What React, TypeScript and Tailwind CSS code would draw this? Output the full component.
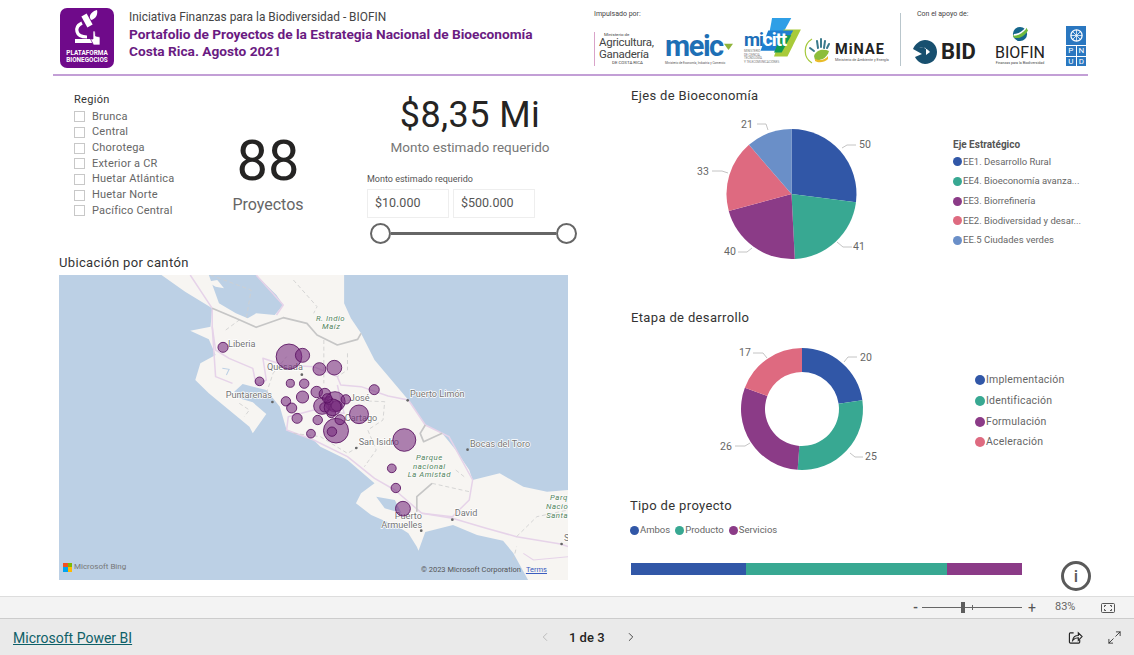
import React from "react";
import { ChevronLeft, ChevronRight, Maximize2 } from "lucide-react";

const BLUE = "#3157a7";
const TEAL = "#38a892";
const PURPLE = "#8b3b87";
const ROSE = "#de6a80";
const SKY = "#6a8fc8";

function polar(cx: number, cy: number, r: number, a: number) {
  return [cx + r * Math.sin(a), cy - r * Math.cos(a)];
}

function Slices({ cx, cy, r, inner = 0, data }: { cx: number; cy: number; r: number; inner?: number; data: [number, string][] }) {
  const total = data.reduce((s, d) => s + d[0], 0);
  let acc = 0;
  return (
    <>
      {data.map(([v, c], i) => {
        const a0 = (acc / total) * Math.PI * 2;
        acc += v;
        const a1 = (acc / total) * Math.PI * 2;
        const large = a1 - a0 > Math.PI ? 1 : 0;
        const [x0, y0] = polar(cx, cy, r, a0);
        const [x1, y1] = polar(cx, cy, r, a1);
        const [x2, y2] = polar(cx, cy, inner, a1);
        const [x3, y3] = polar(cx, cy, inner, a0);
        const d = inner
          ? `M${x0} ${y0}A${r} ${r} 0 ${large} 1 ${x1} ${y1}L${x2} ${y2}A${inner} ${inner} 0 ${large} 0 ${x3} ${y3}Z`
          : `M${cx} ${cy}L${x0} ${y0}A${r} ${r} 0 ${large} 1 ${x1} ${y1}Z`;
        return <path key={i} d={d} fill={c} />;
      })}
    </>
  );
}

function Lead({ pts, tx, ty, label }: { pts: string; tx: number; ty: number; label: string }) {
  return (
    <>
      <polyline points={pts} fill="none" stroke="#c4c4c4" strokeWidth="1" />
      <text x={tx} y={ty} fontSize="10.5" fill="#666" textAnchor="middle" dominantBaseline="middle" fontFamily="Roboto, sans-serif">
        {label}
      </text>
    </>
  );
}

function Dot({ c, size = "w-[9px] h-[9px]" }: { c: string; size?: string }) {
  return <span className={`inline-block shrink-0 rounded-full ${size}`} style={{ backgroundColor: c }} />;
}

function MapView() {
  const circles: [number, number, number][] = [
    [512, 232, 15], [707, 260, 38], [747, 256, 21], [797, 297, 19], [841, 293, 22], [620, 334, 13],
    [711, 340, 12], [752, 341, 14], [959, 359, 15], [747, 381, 18], [698, 394, 14], [715, 414, 15],
    [731, 445, 15], [792, 450, 14], [772, 491, 13], [846, 482, 37], [834, 485, 14], [858, 449, 15],
    [914, 433, 28], [1048, 510, 34], [1011, 595, 13], [1023, 654, 14], [1044, 716, 22],
    [789, 366, 17], [813, 372, 17], [843, 395, 30], [805, 408, 25], [825, 392, 12], [848, 408, 16],
    [812, 412, 14], [832, 430, 13], [875, 388, 14], [836, 412, 25], [820, 385, 14],
  ];
  const labels: [number, number, string][] = [
    [527, 231, "Liberia"], [642, 301, "Quesada"], [520, 384, "Puntarenas"], [1065, 381, "Puerto Limón"],
    [887, 393, "José"], [872, 453, "Cartago"], [913, 525, "San Isidro"], [1242, 530, "Bocas del Toro"],
    [1197, 738, "David"], [1020, 746, "Puerto"], [980, 773, "Armuelles"], [1520, 812, "S"],
  ];
  const green: [number, number, string][] = [
    [830, 153, "R. Indio"], [832, 177, "Maíz"], [1122, 570, "Parque"], [1122, 597, "nacional"],
    [1122, 622, "La Amistad"], [1505, 691, "Parq"], [1500, 718, "Nacio"], [1500, 743, "Santa"],
  ];
  const dots = [[745, 314], [658, 396], [1058, 391], [906, 534], [1235, 539], [1190, 749], [1098, 782], [1513, 822]];
  return (
    <div className="relative w-[509px] h-[305px] bg-[#bcd0e5] overflow-hidden">
      <svg viewBox="27 15 1505 915" preserveAspectRatio="none" className="block w-full h-full">
        <path
          fill="#f7f5f2"
          d="M330 15L400 65L480 115L475 170L415 182L470 208L490 255L445 280L430 330L470 370L530 420L590 470L600 490L640 432L600 397L560 385L545 365L570 342L640 360L680 410L700 480L780 510L800 530L880 570L960 640L920 670L905 700L950 735L1030 770L1060 790L1085 830L1090 842L1110 786L1192 765L1263 795L1340 812L1370 849L1414 930L1532 930L1532 660L1470 665L1400 650L1330 610L1250 630L1240 600L1200 540L1160 490L1110 465L1060 390L1010 330L960 270L920 190L890 145L870 100L870 15Z"
        />
        <path fill="#bcd0e5" d="M470 15L610 15L640 45L670 75L690 105L665 135L610 130L585 145L550 130L500 100Z" />
        <path fill="#f7f5f2" d="M465 35L495 30L515 55L490 50Z" />
        <path fill="#bcd0e5" d="M1225 520L1260 545L1235 570L1215 545ZM965 680L1020 690L1040 730L990 715Z" />
        <path d="M510 295L530 298L522 315" fill="none" stroke="#bcd0e5" strokeWidth="3" />
        <g fill="none" stroke="#e6d3e9" strokeWidth="4.5" strokeLinejoin="round">
          <path d="M415 15L480 115L480 170L490 240L530 265L600 295L610 345L640 330L630 265L690 285L780 290L850 320L860 345L920 350L1000 378L1060 390L1110 465L1180 500L1250 630L1240 690L1190 740L1100 730L1020 660L960 625L880 560L780 510L700 480L705 440L780 420L870 430L850 345" />
          <path d="M480 170L490 320L540 340" />
          <path d="M610 15L650 60L690 105L670 135" />
          <path d="M1100 730L1190 745L1290 775L1380 800L1510 822L1532 830" />
          <path d="M1400 850L1430 870L1532 860" strokeWidth="3" />
        </g>
        <g fill="none" stroke="#cfcfcf" strokeWidth="2.5" strokeDasharray="12 8">
          <path d="M475 15L595 60L580 150" />
          <path d="M720 30L790 110L780 130" />
          <path d="M520 180L560 150M640 370L660 310L700 260" />
          <path d="M810 210L810 340M880 250L880 300L850 320" />
          <path d="M860 390L990 395L985 450L940 480L965 540L930 590" />
          <path d="M720 490L800 500L880 550L930 520" />
          <path d="M560 400L590 420L575 440" />
          <path d="M1130 640L1240 665M1200 600L1225 620" />
          <path d="M1380 800L1440 740L1532 720" />
          <path d="M1370 870L1380 830" />
        </g>
        <g fill="none" stroke="#c6c6c6" strokeWidth="5" strokeLinejoin="round">
          <path d="M480 115L550 145L610 172L690 143L760 160L790 195L850 225L910 208L920 190" />
          <path d="M1110 465L1095 490L1105 515L1160 490" />
          <path d="M1085 725L1085 680L1130 640" />
        </g>
        {dots.map(([x, y], i) => (
          <circle key={i} cx={x} cy={y} r="4" fill="#666" />
        ))}
        <g fontFamily="Roboto, sans-serif" fontSize="27" fill="#757575" stroke="#ffffff" strokeWidth="4" paintOrder="stroke">
          {labels.map(([x, y, t]) => (
            <text key={t} x={x} y={y}>{t}</text>
          ))}
        </g>
        <g fontFamily="Roboto, sans-serif" fontSize="23" fontStyle="italic" fill="#4f8159" stroke="#ffffff" strokeWidth="3" paintOrder="stroke" textAnchor="middle" letterSpacing="1.5">
          {green.map(([x, y, t]) => (
            <text key={t} x={x} y={y}>{t}</text>
          ))}
        </g>
        {circles.map(([x, y, r], i) => (
          <circle key={i} cx={x} cy={y} r={r} fill="#762a7c" fillOpacity="0.58" stroke="#571060" strokeWidth="2.5" />
        ))}
      </svg>
      <div className="absolute left-[4px] bottom-[7px] flex items-center gap-[2px] text-[8px] text-[#777]">
        <span className="grid grid-cols-2 w-[9px] h-[9px]">
          <i className="bg-[#f25022]" />
          <i className="bg-[#7fba00]" />
          <i className="bg-[#00a4ef]" />
          <i className="bg-[#ffb900]" />
        </span>
        Microsoft Bing
      </div>
      <div className="absolute right-[21px] bottom-[5px] flex gap-[5px] text-[7.5px] leading-[10px] text-[#555] whitespace-nowrap">
        <span>© 2023 Microsoft Corporation</span>
        <span className="text-[#3b5dbf] underline">Terms</span>
      </div>
    </div>
  );
}

function LogoBadge() {
  return (
    <div className="w-[54px] h-[60px] rounded-[7px] bg-[#6f0a8a] flex flex-col items-center shrink-0">
      <svg viewBox="0 0 54 42" className="w-[54px] h-[42px] block shrink-0">
        <path d="M24 7L30 18" stroke="#fff" strokeWidth="6" fill="none" />
        <path d="M22 15C14 19 15 29 27 29" stroke="#fff" strokeWidth="3.2" fill="none" />
        <path d="M15 31H32V35H15Z" fill="#fff" />
        <path d="M30 10C29 6 33 3 37 2C38 6 36 11 31 12Z" fill="#fff" />
        <circle cx="27" cy="23" r="2" fill="#6f0a8a" />
        <path d="M33 23L35 23L35.500 28L40 29L40 37L33.500 37L30.500 31L33 31Z" fill="#fff" stroke="#6f0a8a" strokeWidth="0.7" />
      </svg>
      <div className="text-white text-[6.4px] leading-[7px] font-bold text-center whitespace-nowrap">
        PLATAFORMA
        <br />
        BIONEGOCIOS
      </div>
    </div>
  );
}

function Logos() {
  return (
    <div className="flex h-full shrink-0">
      <div className="w-[306px] pt-[9px] flex flex-col">
        <div className="text-[7px] leading-[10px] text-[#444]">Impulsado por:</div>
        <div className="flex items-end mt-[3px] h-[44px]">
          <div className="w-[71px] border-l border-l-[#d9a3c9] pl-[4px] text-[#444] shrink-0">
            <div className="text-[4.4px] leading-[5px] pl-[5px]">Ministerio de</div>
            <div className="text-[11.5px] leading-[11.5px] tracking-tight">Agricultura,</div>
            <div className="text-[11.5px] leading-[11.5px] tracking-tight">Ganadería</div>
            <div className="text-[4.4px] leading-[6px] pl-[13px]">DE COSTA RICA</div>
          </div>
          <div className="w-[79px] shrink-0">
            <div className="text-[29px] leading-[30px] font-bold text-[#1e6fb5] tracking-tighter flex items-center">
              meic
              <svg viewBox="0 0 10 10" className="w-[9px] h-[9px] ml-[1px]">
                <path d="M0 2H10L5 9Z" fill="#8fb43a" />
              </svg>
            </div>
            <div className="text-[3px] leading-[5px] text-[#555] whitespace-nowrap">Ministerio de Economía, Industria y Comercio</div>
          </div>
          <div className="relative w-[60px] h-[48px] shrink-0">
            <svg viewBox="0 0 60 50" className="absolute inset-0 w-full h-full">
              <path d="M28 0H48L36 22H24Z" fill="#2f9fe6" />
              <path d="M40 12H58L44 40H30Z" fill="#a8ca3a" />
              <path d="M24 13H50L38 34H16Z" fill="#1f7fd1" />
              <path d="M38 18H48L38 36H30Z" fill="#129a50" />
            </svg>
            <div className="relative pt-[13px] text-[18.500px] leading-[19px] font-bold text-[#1d6fb8] tracking-tighter">
              mi<span className="text-white">citt</span>
            </div>
            <div className="relative text-[3px] leading-[3.5px] text-[#777]">
              MINISTERIO
              <br />
              DE CIENCIA,
              <br />
              TECNOLOGÍA
              <br />
              Y TELECOMUNICACIONES
            </div>
          </div>
          <div className="flex items-center w-[85px] shrink-0">
            <svg viewBox="0 0 30 30" className="w-[30px] h-[30px] shrink-0">
              <path d="M8 3A14 14 0 0 0 8 27" fill="none" stroke="#a5c93d" strokeWidth="1.2" />
              <path d="M10 20C13 13 20 13 25 15C23 22 17 25 11 24Z" fill="#8dbd3b" />
              <path d="M11 23C16 25 21 24 24 20L24 23C20 27 14 27 11 25Z" fill="#e9bc2a" />
              <path d="M13 5L14 12M17 3L17 11M21 5L20 12M6 12L10 15M25 8L23 12" stroke="#3a7a8c" strokeWidth="2" strokeLinecap="round" />
            </svg>
            <div className="ml-[1px] min-w-0 pt-[4px]">
              <div className="text-[14.500px] leading-[14px] font-bold text-[#222] tracking-[1px]">MiNAE</div>
              <div className="text-[3.7px] leading-[6px] text-[#555] whitespace-nowrap">Ministerio de Ambiente y Energía</div>
            </div>
          </div>
        </div>
      </div>
      <div className="w-px h-[53px] bg-[#b9c6cc] mt-[13px] mr-[10px]" />
      <div className="w-[177px] pt-[9px] flex flex-col">
        <div className="pl-[6px] text-[7px] leading-[10px] text-[#444]">Con el apoyo de:</div>
        <div className="flex items-end mt-[3px] h-[44px]">
          <div className="flex items-center w-[76px] pb-[2px] shrink-0">
            <svg viewBox="0 0 24 24" className="w-[28px] h-[24px] shrink-0">
              <path d="M12 0C19 0 24 5 24 12C24 19 19 24 12 24C8 24 4 21 2 17L9 14L0 9C2 4 7 0 12 0Z" fill="#18506f" />
              <path d="M6 7C10 7 15 9 17 12L13 15L13 8Z" fill="#fff" />
            </svg>
            <span className="ml-[2px] text-[22px] leading-[24px] font-bold text-[#222]">BID</span>
          </div>
          <div className="w-[66px] shrink-0 flex flex-col items-center">
            <svg viewBox="0 0 18 18" className="w-[16px] h-[16px] mb-[2px]">
              <circle cx="9" cy="9" r="8" fill="#15668c" />
              <path d="M1 10C6 11 13 8 16 2L18 5C14 12 7 15 2 13Z" fill="#6fba3d" />
              <path d="M2 9C7 9 12 6 15 2L16 3C12 8 7 11 2 11Z" fill="#fff" />
            </svg>
            <div className="text-[16px] leading-[17px] text-[#222]">BIOFIN</div>
            <div className="text-[3.6px] leading-[5px] text-[#444] whitespace-nowrap">Finanzas para la Biodiversidad</div>
          </div>
          <div className="w-[20px] h-[40px] ml-[13px] grid grid-cols-2 grid-rows-[2fr_1fr_1fr] gap-px shrink-0">
            <div className="col-span-2 bg-[#2a77c0] flex items-center justify-center">
              <svg viewBox="0 0 12 12" className="w-[15px] h-[15px]">
                <circle cx="6" cy="6" r="4.5" fill="none" stroke="#fff" strokeWidth="1" />
                <path d="M6 1.500V10.500M1.500 6H10.500M3 3L9 9M9 3L3 9" stroke="#fff" strokeWidth="0.6" />
              </svg>
            </div>
            {["P", "N", "U", "D"].map((l) => (
              <div key={l} className="bg-[#2a77c0] text-white text-[8px] leading-[9px] flex items-center justify-center">{l}</div>
            ))}
          </div>
        </div>
      </div>
    </div>
  );
}

const regions = ["Brunca", "Central", "Chorotega", "Exterior a CR", "Huetar Atlántica", "Huetar Norte", "Pacífico Central"];

export default function App() {
  const title = "text-[13px] leading-[20px] text-[#333] tracking-[0.35px]";
  return (
    <div className="w-[1134px] h-[655px] bg-white flex flex-col overflow-hidden font-['Roboto',sans-serif]">
      <header className="h-[76px] ml-[53px] mr-[46px] border-b-2 border-b-[#c39fd6] flex shrink-0">
        <div className="ml-[7px] mt-[8px] shrink-0">
          <LogoBadge />
        </div>
        <div className="w-[465px] ml-[15px] pt-[9px] shrink-0">
          <div className="text-[11.9px] leading-[17px] text-[#444] whitespace-nowrap">Iniciativa Finanzas para la Biodiversidad - BIOFIN</div>
          <div className="text-[13.7px] leading-[17px] font-bold text-[#6a1b82] whitespace-nowrap">Portafolio de Proyectos de la Estrategia Nacional de Bioeconomía</div>
          <div className="text-[13.7px] leading-[17px] font-bold text-[#6a1b82]">Costa Rica. Agosto 2021</div>
        </div>
        <Logos />
      </header>

      <main className="h-[520px] flex shrink-0">
        <div className="w-[630px] pl-[59px] shrink-0 flex flex-col">
          <div className="h-[176px] flex shrink-0">
            <div className="w-[150px] ml-[15px] pt-[17px] shrink-0">
              <div className="text-[11px] leading-[14px] text-[#333] tracking-[0.3px] mb-[2px]">Región</div>
              {regions.map((r) => (
                <div key={r} className="flex items-center h-[15.7px]">
                  <span className="w-[11px] h-[11px] border border-[#c8c8c8] mr-[7px] shrink-0" />
                  <span className="text-[11px] text-[#666] tracking-[0.2px] whitespace-nowrap">{r}</span>
                </div>
              ))}
            </div>
            <div className="w-[88px] shrink-0 pt-[52px] flex flex-col items-center">
              <div className="text-[56px] leading-[66px] text-[#252423]">88</div>
              <div className="text-[16px] leading-[22px] text-[#666] whitespace-nowrap">Proyectos</div>
            </div>
            <div className="w-[210px] ml-[55px] shrink-0 pt-[16px]">
              <div className="w-[206px] flex flex-col items-center">
                <div className="text-[36px] leading-[46px] text-[#252423] whitespace-nowrap tracking-[0.4px]">$8,35 Mi</div>
                <div className="text-[13.5px] leading-[18px] text-[#777] whitespace-nowrap">Monto estimado requerido</div>
              </div>
              <div className="text-[9px] leading-[12px] text-[#555] mt-[17px]">Monto estimado requerido</div>
              <div className="flex gap-[4px] mt-[4px]">
                <div className="w-[82px] h-[29px] border border-[#eeeeee] flex items-center pl-[7px] text-[12.5px] text-[#555]">$10.000</div>
                <div className="w-[82px] h-[29px] border border-[#eeeeee] flex items-center pl-[7px] text-[12.5px] text-[#555]">$500.000</div>
              </div>
              <div className="relative h-[21px] mt-[5px] ml-[3px] flex items-center">
                <div className="w-[21px] h-[21px] rounded-full border-2 border-[#666] bg-white shrink-0" />
                <div className="flex-1 h-[3px] bg-[#666]" />
                <div className="w-[21px] h-[21px] rounded-full border-2 border-[#666] bg-white shrink-0" />
              </div>
            </div>
          </div>
          <div className={title + " mt-[1px] mb-[2px]"}>Ubicación por cantón</div>
          <MapView />
        </div>

        <div className="flex-1 relative min-w-0 pt-[10px]">
          <div className={title + " h-[24px] pl-[1px]"}>Ejes de Bioeconomía</div>
          <div className="flex h-[160px]">
            <svg viewBox="630 110 320 160" className="w-[320px] h-[160px] shrink-0">
              <Slices cx={791.5} cy={194} r={65} data={[[50, BLUE], [41, TEAL], [40, PURPLE], [33, ROSE], [21, SKY]]} />
              <Lead pts="842,148 847,145 856,145" tx={865} ty={145} label="50" />
              <Lead pts="837,242 843,247 852,247" tx={859} ty={247} label="41" />
              <Lead pts="752,248 747,252 738,252" tx={730} ty={252} label="40" />
              <Lead pts="728,173 722,171 712,171" tx={703} ty={172} label="33" />
              <Lead pts="768,130 766,124 757,124" tx={747} ty={125} label="21" />
            </svg>
            <div className="ml-[3px] pt-[28px] min-w-0">
              <div className="text-[10px] leading-[14px] font-bold text-[#555]">Eje Estratégico</div>
              {[
                [BLUE, "EE1. Desarrollo Rural"],
                [TEAL, "EE4. Bioeconomía avanza..."],
                [PURPLE, "EE3. Biorrefinería"],
                [ROSE, "EE2. Biodiversidad y desar..."],
                [SKY, "EE.5 Ciudades verdes"],
              ].map(([c, t]) => (
                <div key={t} className="flex items-center h-[19.7px] gap-[1px] text-[9.5px] text-[#666] whitespace-nowrap">
                  <Dot c={c} />
                  {t}
                </div>
              ))}
            </div>
          </div>
          <div className={title + " mt-[38px] h-[27px] pl-[1px]"}>Etapa de desarrollo</div>
          <div className="flex h-[145px]">
            <svg viewBox="630 335 320 145" className="w-[320px] h-[145px] shrink-0">
              <Slices cx={802} cy={409} r={61} inner={37} data={[[20, BLUE], [25, TEAL], [26, PURPLE], [17, ROSE]]} />
              <Lead pts="844,362 848,357 857,357" tx={866} ty={358} label="20" />
              <Lead pts="850,453 855,457 863,457" tx={871} ty={457} label="25" />
              <Lead pts="750,443 745,446 735,446" tx={726} ty={447} label="26" />
              <Lead pts="767,358 763,353 753,353" tx={745} ty={353} label="17" />
            </svg>
            <div className="ml-[25px] pt-[35px] min-w-0">
              {[
                [BLUE, "Implementación", "h-[20px]"],
                [TEAL, "Identificación", "h-[21px]"],
                [PURPLE, "Formulación", "h-[21px]"],
                [ROSE, "Aceleración", "h-[20px]"],
              ].map(([c, t, h]) => (
                <div key={t} className={`flex items-center ${h} gap-[1px] text-[10.5px] text-[#666] whitespace-nowrap tracking-[0.2px]`}>
                  <Dot c={c} size="w-[10px] h-[10px]" />
                  {t}
                </div>
              ))}
            </div>
          </div>
          <div className={title + " mt-[16px]"}>Tipo de proyecto</div>
          <div className="flex items-center gap-[5px] mt-[8px] h-[12px] text-[9.5px] text-[#666]">
            {[
              [BLUE, "Ambos"],
              [TEAL, "Producto"],
              [PURPLE, "Servicios"],
            ].map(([c, t]) => (
              <span key={t} className="flex items-center gap-[1px]">
                <Dot c={c} />
                {t}
              </span>
            ))}
          </div>
          <div className="flex w-[391px] ml-[1px] h-[12px] mt-[27px]">
            <div className="w-[115px]" style={{ backgroundColor: BLUE }} />
            <div className="w-[201px]" style={{ backgroundColor: TEAL }} />
            <div className="w-[75px]" style={{ backgroundColor: PURPLE }} />
          </div>
          <div className="absolute left-[431px] top-[485px] w-[30px] h-[30px] rounded-full border-[3px] border-[#5a5a5a] bg-white flex items-center justify-center text-[#5a5a5a] text-[17px] font-medium leading-none">
            i
          </div>
        </div>
      </main>

      <div className="h-[23px] shrink-0 bg-[#f3f3f3] border-t border-t-[#dddddd] border-b border-b-[#cccccc] flex items-center justify-end text-[#555]">
        <span className="text-[13px] font-bold leading-none">-</span>
        <div className="relative w-[100px] h-px bg-[#666] ml-[4px] mr-[6px]">
          <span className="absolute left-[39px] -top-[5px] w-[4px] h-[11px] bg-[#5d5d5d]" />
          <span className="absolute left-[50px] -top-[2px] w-px h-[5px] bg-[#666]" />
        </div>
        <span className="text-[14px] leading-none">+</span>
        <span className="w-[33px] ml-[19px] text-[11px] text-[#666]">83%</span>
        <svg viewBox="0 0 14 10" className="w-[14px] h-[10px] ml-[13px] mr-[19px]" fill="none" stroke="#444" strokeWidth="0.9">
          <rect x="0.5" y="0.5" width="13" height="9" rx="1" />
          <path d="M3.500 4V2.500H5M9 2.500H10.500V4M10.500 6V7.500H9M5 7.500H3.500V6" />
        </svg>
      </div>

      <footer className="flex-1 bg-[#eaeaea] flex items-center pt-[3px]">
        <a className="ml-[13px] w-[525px] text-[14px] text-[#0e6068] underline shrink-0">Microsoft Power BI</a>
        <ChevronLeft className="w-[14px] h-[14px] text-[#b5b5b5] shrink-0 -mt-[3px]" strokeWidth={1.5} />
        <span className="ml-[17px] w-[55px] text-[13px] font-medium text-[#252423] shrink-0 -mt-[1px]">1 de 3</span>
        <ChevronRight className="w-[14px] h-[14px] text-[#333] shrink-0 -mt-[3px]" strokeWidth={1.5} />
        <svg viewBox="0 0 16 16" className="w-[15px] h-[15px] ml-[430px] shrink-0 -mt-[3px]" fill="none" stroke="#222" strokeWidth="1.2">
          <path d="M6 3H2.500A1.200 1.200 0 0 0 1.500 4.200V13A1.200 1.200 0 0 0 2.700 14H11.500A1.200 1.200 0 0 0 12.500 13V10.500" />
          <path d="M5 11C5.500 7.500 8 5.800 11 5.800V3L15 7L11 11V8.300C8.500 8.300 6.500 9.200 5 11Z" />
        </svg>
        <Maximize2 className="w-[15px] h-[15px] ml-[24px] text-[#222] shrink-0 -mt-[3px]" strokeWidth={1.3} />
      </footer>
    </div>
  );
}
